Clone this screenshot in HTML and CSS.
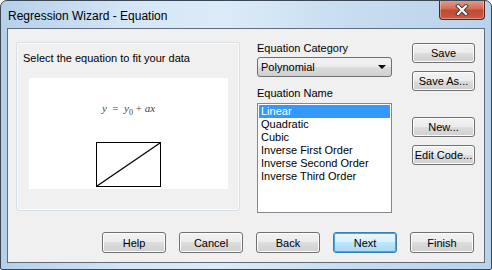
FILE: index.html
```html
<!DOCTYPE html>
<html lang="en">
<head>
    <meta charset="UTF-8">
    <title>Regression Wizard - Equation</title>
    <link rel="stylesheet" href="styles.css">
</head>
<body>
    <div class="window">
        <div class="titlebar">
            <span class="title">Regression Wizard - Equation</span>
            <button class="close" title="Close">
                <svg width="16" height="12" viewBox="0 0 16 12">
                    <path d="M4 2 L12 10 M12 2 L4 10" stroke="#3a3f4a" stroke-width="4" stroke-linecap="square"/>
                    <path d="M4 2 L12 10 M12 2 L4 10" stroke="#ffffff" stroke-width="2" stroke-linecap="square"/>
                </svg>
            </button>
        </div>
        <div class="client">
            <div class="main">
                <div class="group">
                    <div class="group-text">Select the equation to fit your data</div>
                    <div class="preview">
                        <div class="formula"><i>y</i> &nbsp;= &nbsp;<i>y</i><sub>0</sub> + <i>ax</i></div>
                        <svg class="plot" width="65" height="45" viewBox="0 0 65 45">
                            <rect x="0.5" y="0.5" width="64" height="44" fill="#fff" stroke="#000"/>
                            <path d="M1 44 L64 1" stroke="#000" stroke-width="1.3"/>
                        </svg>
                    </div>
                </div>
                <div class="fields">
                    <label class="field-label">Equation Category</label>
                    <div class="combo">
                        <span>Polynomial</span>
                        <span class="arrow"></span>
                    </div>
                    <label class="field-label name-label">Equation Name</label>
                    <ul class="listbox">
                        <li class="selected">Linear</li>
                        <li>Quadratic</li>
                        <li>Cubic</li>
                        <li>Inverse First Order</li>
                        <li>Inverse Second Order</li>
                        <li>Inverse Third Order</li>
                    </ul>
                </div>
                <div class="side-buttons">
                    <button class="btn">Save</button>
                    <button class="btn">Save As...</button>
                    <button class="btn gap-top">New...</button>
                    <button class="btn">Edit Code...</button>
                </div>
            </div>
            <div class="footer">
                <button class="btn">Help</button>
                <button class="btn">Cancel</button>
                <button class="btn">Back</button>
                <button class="btn default">Next</button>
                <button class="btn">Finish</button>
            </div>
        </div>
    </div>
</body>
</html>
```

FILE: styles.css
```css
* {
    box-sizing: border-box;
}
body {
    margin: 0;
    font-family: "Liberation Sans", Arial, sans-serif;
    font-size: 11px;
    color: #000;
    background-color: #fff;
}
.window {
    width: 492px;
    height: 270px;
    border: 1px solid #3d4654;
    border-radius: 7px 7px 2px 2px;
    background: linear-gradient(to right, #b6cfe9 0%, #d3e5f6 25%, #dcebf8 45%, #c9ddf1 70%, #b9d2eb 100%);
    display: flex;
    flex-direction: column;
    overflow: hidden;
}
.titlebar {
    height: 27px;
    flex-shrink: 0;
    display: flex;
    justify-content: space-between;
    align-items: flex-start;
}
.title {
    font-size: 12px;
    margin: 8px 0 0 7px;
    color: #000;
}
.close {
    width: 46px;
    height: 20px;
    margin: -1px 6px 0 0;
    padding: 0;
    border: 1px solid #5b2219;
    border-top: none;
    border-radius: 0 0 4px 4px;
    background: linear-gradient(to bottom, #e3a08f 0%, #d56b55 45%, #c24a33 55%, #c85a3f 100%);
    box-shadow: inset 0 0 0 1px rgba(255,255,255,0.35);
    display: flex;
    justify-content: center;
    align-items: center;
}
.client {
    flex: 1;
    margin: 0 6px 6px 6px;
    border: 1px solid #5f6c7b;
    background-color: #f0f0f0;
    display: flex;
    flex-direction: column;
}
.main {
    display: flex;
    align-items: flex-start;
    padding: 13px 0 0 8px;
}
.group {
    width: 224px;
    height: 169px;
    border: 1px solid #d5dfe5;
    border-radius: 3px;
    box-shadow: inset 0 0 0 1px #fdfdfd;
    padding: 0 11px 0 12px;
}
.group-text {
    margin: 9px 0 0 -6px;
    height: 13px;
}
.preview {
    margin-top: 13px;
    height: 111px;
    background-color: #fff;
    display: flex;
    flex-direction: column;
    align-items: center;
}
.formula {
    margin-top: 24px;
    font-family: "Liberation Serif", "Times New Roman", serif;
    font-size: 11px;
    color: #444;
    height: 14px;
}
.formula sub {
    font-size: 8px;
}
.plot {
    display: block;
    margin-top: 26px;
}
.fields {
    width: 135px;
    margin-left: 17px;
    display: flex;
    flex-direction: column;
}
.field-label {
    display: block;
    height: 13px;
}
.combo {
    margin-top: 2px;
    height: 20px;
    border: 1px solid #707070;
    border-radius: 3px;
    background: linear-gradient(to bottom, #f2f2f2 0%, #ebebeb 50%, #dddddd 50%, #cfcfcf 100%);
    display: flex;
    justify-content: space-between;
    align-items: center;
    padding: 0 5px 0 3px;
}
.arrow {
    width: 0;
    height: 0;
    border-left: 4px solid transparent;
    border-right: 4px solid transparent;
    border-top: 4px solid #000;
}
.name-label {
    margin-top: 10px;
}
.listbox {
    list-style: none;
    margin: 3px 0 0 0;
    padding: 1px;
    height: 110px;
    border: 1px solid #828790;
    background-color: #fff;
}
.listbox li {
    height: 13px;
    line-height: 13px;
    padding-left: 2px;
}
.listbox .selected {
    background-color: #3399ff;
    color: #fff;
}
.side-buttons {
    margin: 1px 0 0 20px;
    display: flex;
    flex-direction: column;
    gap: 8px;
}
.side-buttons .gap-top {
    margin-top: 18px;
}
.btn {
    width: 63px;
    height: 20px;
    padding: 0;
    font-family: "Liberation Sans", Arial, sans-serif;
    font-size: 11px;
    color: #000;
    border: 1px solid #707070;
    border-radius: 3px;
    background: linear-gradient(to bottom, #f2f2f2 0%, #ebebeb 50%, #dddddd 50%, #cfcfcf 100%);
    box-shadow: inset 0 0 0 1px #fcfcfc;
}
.btn.default {
    border-color: #3c7fb1;
    background: linear-gradient(to bottom, #eaf6fd 0%, #d9f0fc 50%, #bee6fd 50%, #a7d9f5 100%);
    box-shadow: inset 0 0 0 1px #48a6dd;
}
.footer {
    display: flex;
    justify-content: flex-end;
    gap: 13px;
    padding: 19px 10px 0 0;
}
.footer .btn {
    width: 64px;
    height: 21px;
}
```
